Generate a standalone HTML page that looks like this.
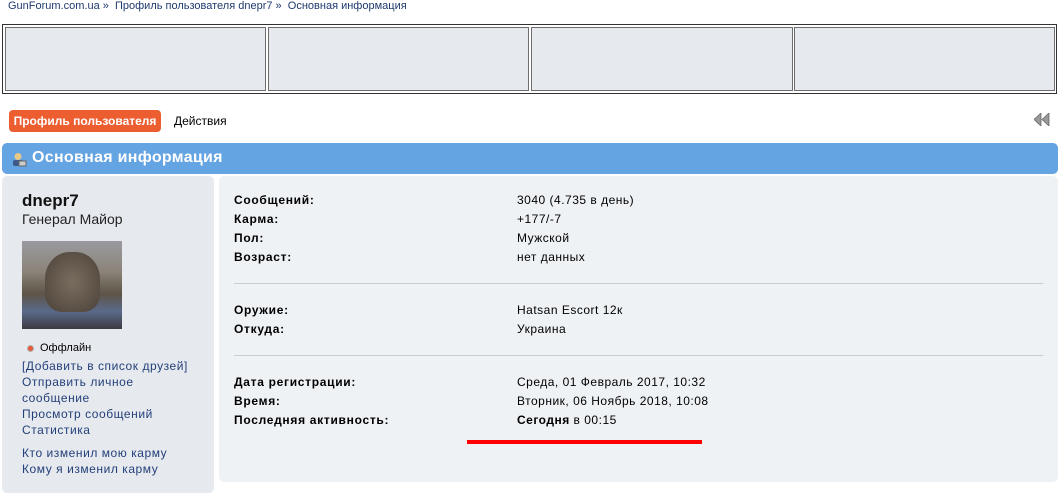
<!DOCTYPE html>
<html><head><meta charset="utf-8"><style>
*{margin:0;padding:0;box-sizing:border-box}
body{width:1059px;height:493px;background:#fff;font-family:"Liberation Sans",Arial,sans-serif;font-size:12px;color:#000;position:relative;overflow:hidden}
.a{position:absolute;white-space:nowrap}
.nav{color:#1f3a6e;font-size:11px}
.cell{position:absolute;top:27px;height:64px;background:#e6e9ee;border:1px solid #6e6e6e}
.lnk{color:#24407a;letter-spacing:0.55px}
.lbl{font-weight:bold;left:234px;letter-spacing:0.7px}
.val{left:517px;letter-spacing:0.5px}
.hr{position:absolute;left:234px;width:809px;height:1px;background:#cbcdd0}
</style></head><body>
<div class="a nav" style="left:8px;top:0px">GunForum.com.ua » &nbsp;Профиль пользователя dnepr7 » &nbsp;Основная информация</div>
<div style="position:absolute;left:2px;top:24px;width:1055px;height:70px;border:1px solid #333"></div>
<div class="cell" style="left:5px;width:261px"></div>
<div class="cell" style="left:268px;width:261px"></div>
<div class="cell" style="left:531px;width:262px"></div>
<div class="cell" style="left:794px;width:261px"></div>

<div class="a" style="left:9px;top:110px;width:152px;height:22px;background:#ec5e30;border-radius:4px;color:#fff;font-weight:bold;font-size:12px;line-height:22px;text-align:center">Профиль пользователя</div>
<div class="a" style="left:174px;top:114px">Действия</div>
<svg class="a" style="left:1034px;top:113px" width="16" height="13"><path d="M0 6.5L7 0V13Z M8 6.5L15 0V13Z" fill="#999" stroke="#666" stroke-width="0.8"/></svg>

<div class="a" style="left:2px;top:143px;width:1056px;height:31px;background:#64a4e2;border-radius:5px"></div>
<svg class="a" style="left:12px;top:152px" width="15" height="15"><circle cx="6" cy="4.5" r="3.5" fill="#e8c98a"/><rect x="1" y="8" width="10" height="6" rx="2" fill="#3e5a8a"/><rect x="7" y="9" width="7" height="5" fill="#ccc" stroke="#666" stroke-width="1"/></svg>
<div class="a" style="left:32px;top:149px;color:#fff;font-weight:bold;font-size:16px;letter-spacing:0.3px">Основная информация</div>

<div class="a" style="left:2px;top:176px;width:212px;height:317px;background:#e6e9ee;border-radius:5px"></div>
<div class="a" style="left:219px;top:176px;width:839px;height:306px;background:#eff2f5;border-radius:5px"></div>

<div class="a" style="left:22px;top:191px;font-size:17px;font-weight:bold;color:#111">dnepr7</div>
<div class="a" style="left:22px;top:211px;font-size:14px;color:#222">Генерал Майор</div>
<div class="a" style="left:22px;top:241px;width:100px;height:88px;background:linear-gradient(180deg,#9a9aa0 0%,#8b8378 35%,#5e5448 60%,#5a6a8a 80%,#3c3a40 100%)"></div>
<div class="a" style="left:45px;top:252px;width:55px;height:60px;border-radius:45% 45% 30% 30%;background:radial-gradient(#7a6d60,#4c4238)"></div>
<div class="a" style="left:27px;top:345px;width:7px;height:7px;border-radius:50%;background:#e85a3a;border:1px solid #b0b0b0"></div>
<div class="a" style="left:40px;top:342px;font-size:11px">Оффлайн</div>
<div class="a lnk" style="left:22px;top:358px;line-height:16px">[Добавить в список друзей]<br>Отправить личное<br>сообщение<br>Просмотр сообщений<br>Статистика</div>
<div class="a lnk" style="left:22px;top:445px;line-height:16px">Кто изменил мою карму<br>Кому я изменил карму</div>

<div class="a lbl" style="top:193px">Сообщений:</div><div class="a val" style="top:193px">3040 (4.735 в день)</div>
<div class="a lbl" style="top:212px">Карма:</div><div class="a val" style="top:212px">+177/-7</div>
<div class="a lbl" style="top:231px">Пол:</div><div class="a val" style="top:231px">Мужской</div>
<div class="a lbl" style="top:250px">Возраст:</div><div class="a val" style="top:250px">нет данных</div>
<div class="hr" style="top:283px"></div>
<div class="a lbl" style="top:303px">Оружие:</div><div class="a val" style="top:303px">Hatsan Escort 12к</div>
<div class="a lbl" style="top:322px">Откуда:</div><div class="a val" style="top:322px">Украина</div>
<div class="hr" style="top:355px"></div>
<div class="a lbl" style="top:375px">Дата регистрации:</div><div class="a val" style="top:375px">Среда, 01 Февраль 2017, 10:32</div>
<div class="a lbl" style="top:394px">Время:</div><div class="a val" style="top:394px">Вторник, 06 Ноябрь 2018, 10:08</div>
<div class="a lbl" style="top:413px">Последняя активность:</div><div class="a val" style="top:413px"><b>Сегодня</b> в 00:15</div>
<div class="a" style="left:467px;top:440px;width:235px;height:4px;background:#f00"></div>
</body></html>
